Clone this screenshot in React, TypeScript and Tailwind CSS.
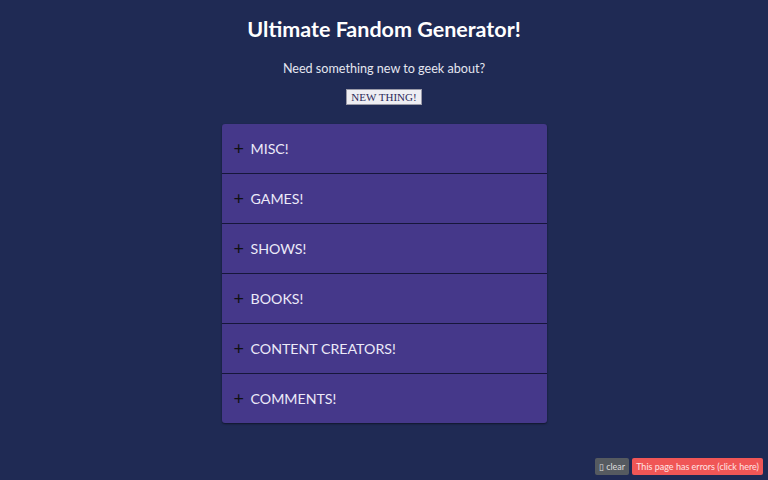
import { ReactElement } from 'react';

const categories = ['MISC!', 'GAMES!', 'SHOWS!', 'BOOKS!', 'CONTENT CREATORS!', 'COMMENTS!'];

const App = (): ReactElement => {
  return (
    <div className="relative h-[480px] w-full overflow-hidden bg-[#1f2a54] text-white font-['Lato','Noto_Sans',sans-serif]">
      {/* Header */}
      <h1 className="pt-[15px] text-center text-[21.5px] font-bold leading-[28px]">Ultimate Fandom Generator!</h1>
      <p className="mt-[17px] text-center text-[12.6px] leading-[18px] text-[#e4e6f0]">Need something new to geek about?</p>
      <div className="mt-[11px] flex justify-center">
        <button className="h-[16px] border border-[#9a9aa8] bg-[#eeeef3] px-[4px] text-[11px] leading-[13px] text-[#2b2a5a] font-['Liberation_Serif',serif]">
          NEW THING!
        </button>
      </div>

      {/* Accordion */}
      <section className="mx-auto mt-[19px] w-[325px] overflow-hidden rounded-[3px] bg-[#45388a] shadow-[0_1px_2px_rgba(0,0,0,0.5)]">
        {categories.map((c, i) => (
          <div
            key={c}
            className={`flex items-center pl-[12px] ${i < categories.length - 1 ? 'h-[50px] border-b border-[#16163a]' : 'h-[49px]'}`}
          >
            <span className="w-[17px] text-[18px] leading-none text-[#111] -translate-y-[1px]">+</span>
            <span className="text-[14.2px] text-[#eceaf8]">{c}</span>
          </div>
        ))}
      </section>

      {/* Error bar */}
      <div className="absolute bottom-[5px] right-[5px] flex gap-[3px] text-[9px] leading-[17px]">
        <span className="rounded-[2px] bg-[#555a60] px-[4px] text-[#ddd]">▯ clear</span>
        <span className="rounded-[2px] bg-[#f05656] px-[4px] text-[#ffe4e4]">This page has errors (click here)</span>
      </div>
    </div>
  );
};

export default App;
